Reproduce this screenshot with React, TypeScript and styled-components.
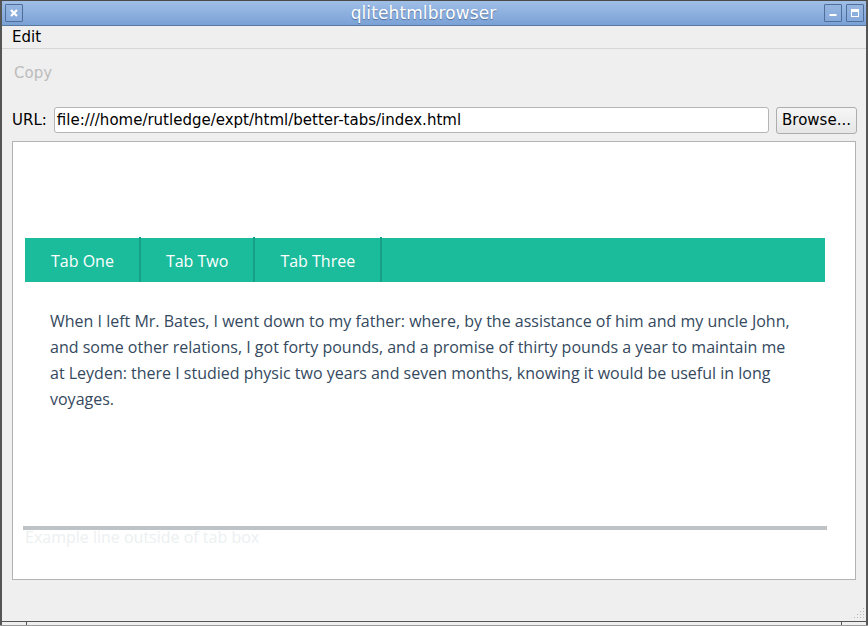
import React from 'react';
import styled, { createGlobalStyle } from 'styled-components';

const uiFont = `"DejaVu Sans", "Liberation Sans", sans-serif`;
const pageFont = `"Open Sans", "Noto Sans", sans-serif`;

const GlobalStyle = createGlobalStyle`
  html, body {
    margin: 0;
    padding: 0;
    background: #efefef;
  }
  body {
    width: 868px;
    height: 626px;
    overflow: hidden;
  }
  * {
    box-sizing: border-box;
  }
`;

const Window = styled.div`
  width: 868px;
  height: 626px;
  display: flex;
  flex-direction: column;
  background: #efefef;
  border-left: 2px solid #555;
  border-right: 2px solid #555;
  border-top: 1px solid #4a4a4a;
  font-family: ${uiFont};
  font-size: 15px;
  color: #000;
`;

const TitleBar = styled.div`
  height: 25px;
  flex: none;
  display: flex;
  align-items: center;
  padding: 0 2px 0 3px;
  background: linear-gradient(#a0bfe7, #7aa1d6);
  border-bottom: 1px solid #58799f;
`;

const Title = styled.div`
  flex: 1;
  text-align: center;
  color: #fff;
  font-size: 17px;
  line-height: 20px;
  text-shadow: 0 1px 1px rgba(40, 60, 100, 0.55);
  letter-spacing: 0.1px;
`;

const WinButton = styled.div<{ $gap?: number }>`
  width: 18px;
  height: 18px;
  margin-left: ${p => p.$gap ?? 0}px;
  border: 1px solid #4f6f9a;
  border-radius: 1px;
  background: linear-gradient(#96b6e1, #85a9db);
  display: flex;
  align-items: center;
  justify-content: center;
`;

const MenuBar = styled.div`
  height: 23px;
  flex: none;
  display: flex;
  align-items: center;
  padding: 0 10px;
  border-bottom: 1px solid #d6d6d6;
`;

const MenuItem = styled.span`
  line-height: 20px;
`;

const ToolBar = styled.div`
  height: 47px;
  flex: none;
  display: flex;
  align-items: center;
  padding: 0 12px;
`;

const ToolAction = styled.span<{ $disabled?: boolean }>`
  color: ${p => (p.$disabled ? '#bcbcbc' : '#000')};
`;

const UrlRow = styled.div`
  margin-top: 11px;
  height: 26px;
  flex: none;
  display: flex;
  align-items: center;
  padding: 0 9px 0 10px;
`;

const UrlLabel = styled.span`
  margin-right: 7px;
`;

const UrlInput = styled.div`
  flex: 1;
  height: 26px;
  border: 1px solid #b5b5b5;
  border-radius: 3px;
  background: #fff;
  padding: 0 2px;
  line-height: 24px;
  white-space: nowrap;
  overflow: hidden;
`;

const PushButton = styled.div`
  margin-left: 7px;
  width: 81px;
  height: 27px;
  border: 1px solid #adadad;
  border-radius: 3px;
  background: linear-gradient(#f6f6f6, #e6e6e6);
  display: flex;
  align-items: center;
  justify-content: center;
`;

const BrowserView = styled.div`
  margin: 8px 10px 0;
  height: 439px;
  flex: none;
  border: 1px solid #b3b3b3;
  background: #fff;
  padding: 96px 0 0 12px;
  font-family: ${pageFont};
  font-size: 16px;
`;

const TabBox = styled.div`
  width: 800px;
`;

const TabBar = styled.div`
  display: flex;
  height: 44px;
  background: #1abc9c;
`;

const Tab = styled.div`
  margin-top: -1px;
  height: 45px;
  padding: 3px 25px 0;
  line-height: 42px;
  color: #fff;
  border-right: 2px solid #16a085;
  &:first-child {
    margin-left: 1px;
  }
`;

const TabPanel = styled.div`
  height: 244px;
  padding: 26px 25px 0;
`;

const Paragraph = styled.p`
  margin: 0;
  line-height: 26px;
  color: #34495e;
`;

const Rule = styled.div`
  margin-left: -2px;
  width: 804px;
  height: 4px;
  background: #bdc3c7;
`;

const FaintLine = styled.div`
  margin-top: -3px;
  line-height: 20px;
  color: #ecf0f1;
`;

const Filler = styled.div`
  flex: 1;
  display: flex;
  align-items: flex-end;
  justify-content: flex-end;
  padding: 0 1px 2px 0;
`;

const BottomFrame = styled.div`
  height: 5px;
  flex: none;
  display: flex;
  border-top: 1px solid #555;
  border-bottom: 1px solid #9a9a9a;
  margin: 0 -2px;
`;

const FrameSegment = styled.div<{ $width?: number }>`
  width: ${p => (p.$width ? `${p.$width}px` : 'auto')};
  flex: ${p => (p.$width ? 'none' : 1)};
  border-right: 1px solid #555;
  &:last-child {
    border-right: none;
  }
`;

const CloseIcon = () => (
  <svg width="8" height="8" viewBox="0 0 8 8">
    <path d="M1 1 L7 7 M7 1 L1 7" stroke="#fff" strokeWidth="2.2" />
  </svg>
);

const MinimizeIcon = () => (
  <svg width="8" height="8" viewBox="0 0 8 8">
    <rect x="0.5" y="5" width="7" height="2" fill="#fff" />
  </svg>
);

const MaximizeIcon = () => (
  <svg width="8" height="8" viewBox="0 0 8 8">
    <rect x="0.5" y="0.5" width="7" height="7" fill="none" stroke="#fff" strokeWidth="1" />
    <rect x="0.5" y="0.5" width="7" height="2.5" fill="#fff" />
  </svg>
);

const SizeGrip = () => (
  <svg width="12" height="12" viewBox="0 0 12 12">
    {[
      [10, 1],
      [7, 4],
      [10, 4],
      [4, 7],
      [7, 7],
      [10, 7],
      [1, 10],
      [4, 10],
      [7, 10],
      [10, 10],
    ].map(([x, y]) => (
      <rect key={`${x}-${y}`} x={x} y={y} width="1" height="1" fill="#b8b8b8" />
    ))}
  </svg>
);

const tabs = ['Tab One', 'Tab Two', 'Tab Three'];

export default function App() {
  return (
    <>
      <GlobalStyle />
      <Window>
        <TitleBar>
          <WinButton>
            <CloseIcon />
          </WinButton>
          <Title>qlitehtmlbrowser</Title>
          <WinButton>
            <MinimizeIcon />
          </WinButton>
          <WinButton $gap={4}>
            <MaximizeIcon />
          </WinButton>
        </TitleBar>

        <MenuBar>
          <MenuItem>Edit</MenuItem>
        </MenuBar>

        <ToolBar>
          <ToolAction $disabled>Copy</ToolAction>
        </ToolBar>

        <UrlRow>
          <UrlLabel>URL:</UrlLabel>
          <UrlInput>file:///home/rutledge/expt/html/better-tabs/index.html</UrlInput>
          <PushButton>Browse...</PushButton>
        </UrlRow>

        <BrowserView>
          <TabBox>
            <TabBar>
              {tabs.map(t => (
                <Tab key={t}>{t}</Tab>
              ))}
            </TabBar>
            <TabPanel>
              <Paragraph>
                When I left Mr. Bates, I went down to my father: where, by the assistance of him and
                my uncle John, and some other relations, I got forty pounds, and a promise of thirty
                pounds a year to maintain me at Leyden: there I studied physic two years and seven
                months, knowing it would be useful in long voyages.
              </Paragraph>
            </TabPanel>
            <Rule />
            <FaintLine>Example line outside of tab box</FaintLine>
          </TabBox>
        </BrowserView>

        <Filler>
          <SizeGrip />
        </Filler>

        <BottomFrame>
          <FrameSegment $width={27} />
          <FrameSegment />
          <FrameSegment $width={26} />
        </BottomFrame>
      </Window>
    </>
  );
}
